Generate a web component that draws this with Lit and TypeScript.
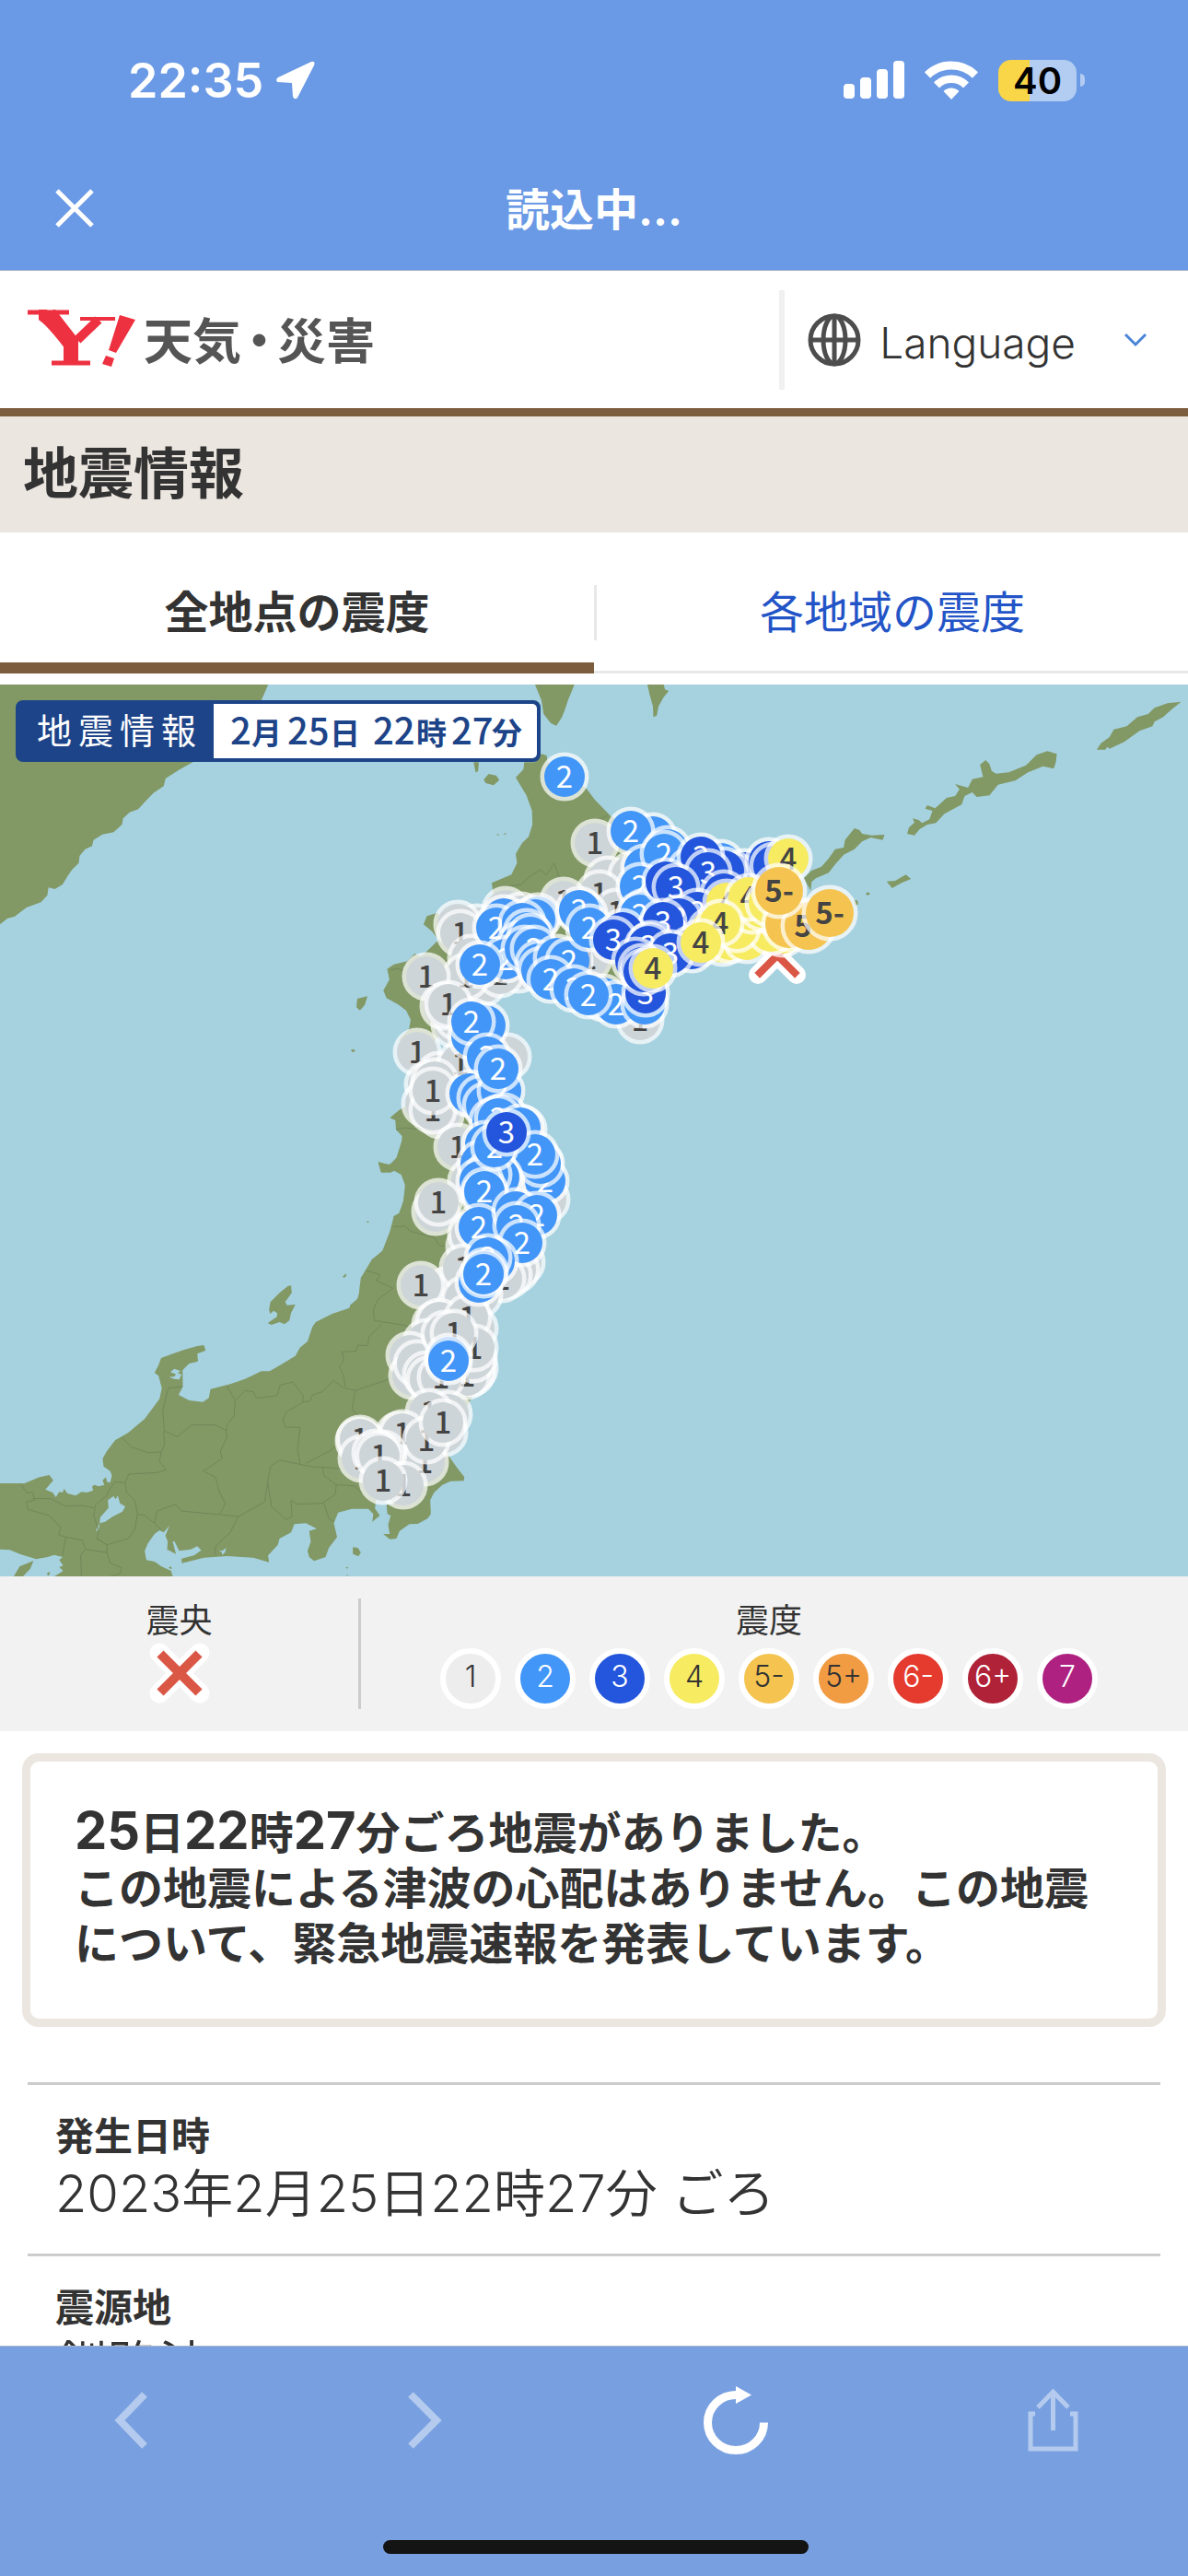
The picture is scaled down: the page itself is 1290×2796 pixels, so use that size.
import { LitElement, html, svg, css } from "lit";
import { customElement } from "lit/decorators.js";

type Level = "1" | "2" | "3" | "4" | "5-" | "5+" | "6-" | "6+" | "7";

const LEVELS: { level: Level; fill: string; dark: boolean }[] = [
  { level: "1", fill: "#ededed", dark: true },
  { level: "2", fill: "#4296f8", dark: false },
  { level: "3", fill: "#2356dd", dark: false },
  { level: "4", fill: "#f6eb61", dark: true },
  { level: "5-", fill: "#f5c450", dark: true },
  { level: "5+", fill: "#f19c43", dark: true },
  { level: "6-", fill: "#e53a2e", dark: false },
  { level: "6+", fill: "#b02238", dark: false },
  { level: "7", fill: "#ae2181", dark: false },
];

// Observation points in map coordinates, later ones lie on top.
const POINTS: Record<string, number[][]> = {
  "1": [
    [646, 915], [660, 955], [686, 950], [651, 970], [669, 990], [612, 978], [639, 1040], [695, 1107],
    [549, 988], [566, 994], [518, 1007], [497, 1003], [500, 1013], [524, 1067], [563, 1052], [543, 1057], [512, 1040],
    [506, 1060], [463, 1060], [494, 1112], [497, 1104], [482, 1092], [487, 1090], [453, 1142], [551, 1147],
    [477, 1167], [500, 1155], [465, 1177], [472, 1174], [462, 1198], [478, 1210], [470, 1205], [470, 1184],
    [497, 1245], [568, 1226], [585, 1262], [593, 1302], [575, 1300], [512, 1282], [552, 1290], [473, 1315], [476, 1305],
    [510, 1353], [512, 1340], [566, 1370], [560, 1378], [552, 1384], [545, 1388], [487, 1400], [503, 1376],
    [520, 1405], [505, 1410], [457, 1395],
    [473, 1438], [515, 1442], [477, 1435], [463, 1457], [515, 1485], [512, 1490], [507, 1493],
    [514, 1475], [508, 1430], [515, 1463], [445, 1471], [448, 1493], [453, 1480], [463, 1492], [483, 1448],
    [493, 1447], [467, 1497], [479, 1495],
    [487, 1535], [466, 1533], [482, 1555], [433, 1558], [437, 1556], [461, 1587], [463, 1563], [481, 1544],
    [390, 1564], [391, 1562], [393, 1583], [416, 1578], [408, 1577], [412, 1580], [438, 1612], [416, 1607],
  ],
  "2": [
    [613, 843], [709, 908], [685, 902], [725, 922], [700, 942], [721, 927], [695, 962], [783, 937], [750, 945],
    [700, 990], [695, 993], [547, 997], [539, 1007], [584, 995], [581, 998], [567, 1002], [572, 1012], [565, 1025],
    [549, 1041], [576, 1017], [570, 1030], [580, 1030], [521, 1047], [585, 1046], [588, 1053], [605, 1040], [618, 1043],
    [598, 1063], [634, 992], [629, 988], [640, 1007], [655, 1083], [669, 1090], [623, 1073], [639, 1080], [700, 1090],
    [512, 1125], [527, 1113], [512, 1109], [529, 1147], [510, 1187], [522, 1192], [528, 1200], [544, 1184], [541, 1160],
    [547, 1212], [535, 1217], [541, 1214], [565, 1224], [527, 1242], [522, 1263], [592, 1282], [587, 1263],
    [581, 1253], [542, 1278], [530, 1275], [521, 1282], [537, 1245], [526, 1297], [526, 1293], [520, 1332],
    [560, 1315], [583, 1319], [561, 1330], [567, 1349], [537, 1369], [520, 1392], [530, 1365], [526, 1380], [525, 1383],
    [487, 1473], [487, 1477],
  ],
  "3": [
    [809, 947], [797, 950], [786, 945], [835, 935], [840, 940], [761, 930], [765, 968], [769, 947], [786, 970],
    [723, 957], [734, 963], [757, 990], [737, 997], [720, 1001], [676, 1012], [666, 1020], [751, 1030], [707, 1025],
    [704, 1027], [728, 1035], [701, 1078], [690, 1043], [697, 1050], [699, 1055], [550, 1229],
  ],
  "4": [
    [856, 932], [772, 1010], [789, 980], [785, 1023], [793, 1020], [811, 1020], [850, 1013], [837, 1011], [840, 990],
    [800, 1008], [817, 988], [828, 985], [813, 974], [835, 980], [782, 1002], [761, 1023], [709, 1051],
  ],
  "5-": [[857, 1003], [878, 1005], [846, 967], [901, 991]],
};

const SHEET_NORTHWEST = [
  "M0 9H708L690 60 660 120 600 190 510 261 475 285 437 315 432 340 405 362 385 388 365 415 342 425 325 445 322 465 300 490 270 497 247 515 243 535 225 545 210 567 208 590 190 612 180 630 165 660 145 675 128 670 125 695 108 718 70 735 38 765 20 770 0 790Z",
  "M1318 670 1345 695 1290 745 1230 780 1180 790 1155 752 1127 763 1118 790 1140 812 1158 840 1118 888 1108 894 1095 885 1075 910 1040 920 1022 935 1028 970 1012 1005 1020 1030 1050 1050 1072 1070 1084 1100 1080 1130 1055 1165 1060 1190 1130 1190 1180 1130 1240 1080 1250 980 1380 960 1568 1000 1568 600 1380 600Z",
  "M1250 262H1264L1262 290 1256 296Z",
  "M1277 318 1290 300 1310 305 1318 320 1303 337 1282 330Z",
  "M943 1032 970 1024 963 1052 950 1070 941 1060Z",
  "M926 1199 933 1196 938 1202 931 1207Z",
  "M1310 498 1315 495 1318 500ZM1328 496 1334 493 1337 498Z",
];
const SHEET_NORTHEAST = [
  "M45 9H137L122 60 115 90 108 115 95 143 82 135 65 105 60 60Z",
  "M307 9H345L348 25 357 30 345 50 333 80 329 110 321 115 320 80 312 40Z",
  "M1552 65 1520 70 1490 85 1475 105 1450 115 1425 145 1395 155 1385 180 1365 200 1355 221H1375L1380 212 1385 218 1420 195 1455 160 1485 145 1490 130 1510 115 1530 90Z",
  "M1262 235 1240 226 1215 238 1190 272 1150 295 1120 299 1110 290 1105 268 1096 255 1083 270 1090 310 1065 317 1055 345 1025 333 1035 350 1025 372 1005 378 978 412 960 402 955 413 972 420 965 448 948 460 940 450 926 445 930 458 917 475 913 495 930 500 942 480 960 465 980 460 1000 430 1040 400 1047 372 1065 360 1075 375 1105 370 1125 335 1165 322 1195 295 1230 275 1255 283 1260 260Z",
  "M860 498 856 515 828 507 808 520 790 545 765 563 745 595 730 622 700 640 690 652 688 680 672 640 690 615 713 602 730 575 745 545 765 540 768 515 790 477 802 483 808 495 830 500Z",
  "M865 650 885 648 910 628 922 642 900 655 878 672Z",
  "M816 690 821 685 827 690 821 696ZM788 712 797 712 799 724 792 730Z",
  "M0 312 18 285 20 262 45 262 60 235 72 240 75 262 110 290 165 348 185 385 222 438 300 500 380 540 480 600 560 600 620 540 645 535 600 640 620 700 690 735 620 800 500 860 400 900 330 950 300 1080 200 1000 100 940 -30 900 -56 655 -10 628 3 590 0 560 15 525 30 505 39 465 38 420 25 370Z",
];
const SHEET_TOHOKU = [
  "M185 360 160 375 130 400 148 408 150 438 170 460 165 505 145 545 125 553 92 543 103 578 132 578 150 570 165 580 180 612 178 660 160 710 143 720 130 770 105 835 72 860 45 905 33 940 30 985 0 1010V1080H450V1000L540 962 545 955 560 850 610 700 640 620 600 560 560 450 480 360 380 250Z",
  "M540 952 547 951 549 957 542 960ZM54 738 60 736 62 740 56 741Z",
];
const SHEET_CENTRAL = [
  "M1568 0H1220L1205 50 1185 72 1150 65 1158 97 1195 90 1220 105 1232 140 1225 200 1213 235 1198 240 1190 290 1165 350 1130 385 1110 420 1097 440 1092 490 1085 515 1060 540 1010 558 960 585 950 600 935 648 912 668 898 695 860 720 820 745 795 745 745 770 700 787 640 803 635 832 617 845 575 840 543 822 556 795 555 742 575 720 602 713 600 688 625 678 620 660 600 663 560 675 520 690 490 702 482 725 470 750 482 760 492 800 485 835 440 900 390 945 350 970 325 1005 312 1030 315 1055 335 1070 340 1085 335 1108 325 1105 322 1090 312 1100 317 1115 300 1120 288 1115 280 1120 283 1133 265 1140 248 1138 230 1150 205 1143 195 1128 190 1140 180 1138 170 1155 160 1140 138 1130 150 1115 162 1100 150 1083 120 1090 75 1110 0 1110V1325L30 1327 60 1340 110 1357 145 1350 165 1343 190 1350 180 1360 192 1378 180 1383 192 1395 178 1405 165 1413H525L520 1395 490 1380 470 1365 445 1360 440 1330 450 1305 470 1275 485 1263 498 1270 515 1248 503 1280 510 1300 508 1325 535 1340 525 1300 530 1298 545 1330 580 1325 600 1315 612 1328 590 1345 552 1355 553 1370 620 1352 690 1347 770 1352 818 1367 815 1345 845 1310 850 1290 885 1270 895 1243 930 1240 963 1258 940 1265 945 1300 935 1330 940 1350 955 1363 990 1350 1000 1320 1025 1285 1015 1240 1028 1205 1070 1193 1120 1193 1135 1210 1132 1235 1155 1215 1140 1192 1145 1150 1200 1150 1195 1180 1175 1180 1178 1210 1188 1215 1180 1245 1185 1275 1165 1275 1185 1292 1205 1290 1215 1265 1245 1243 1270 1242 1300 1225 1310 1210 1308 1165 1320 1140 1345 1115 1370 1103 1410 1102 1412 1090 1390 1060 1360 1015 1400 900 1500 700 1480 560 1568 400Z",
  "M885 466 887 490 867 520 873 530 898 528 885 555 880 580 865 592 850 585 825 594 814 588 842 568 843 556 832 548 822 558 818 545 822 520 850 490 875 468Z",
  "M1042 437 1052 427 1053 434 1046 441Z",
  "M1073 1318 1088 1320 1097 1335 1090 1348 1073 1340Z",
  "M1051 1383 1058 1382 1056 1389ZM1053 1408 1058 1409 1056 1413ZM142 1405 150 1398 152 1405 147 1411ZM512 1385 520 1380 522 1390Z",
  "M42 1413 60 1380 80 1372 102 1362 92 1388 70 1413Z",
];
const CENTRAL_WATER = [
  "M345 1152 352 1162 358 1150 365 1175 381 1186 372 1202 340 1220 320 1235 303 1240 300 1262 291 1265 303 1240 305 1220 330 1190 328 1165Z",
  "M665 1328 676 1330 688 1320 684 1335 676 1343 674 1334Z",
  "M518 748 530 737 550 745 540 750 552 756 545 772 530 770 514 764 530 762 535 755Z",
];
const CENTRAL_BORDERS = [
  "M1195 275 1230 272 1250 290 1320 310 1335 335 1370 340",
  "M1115 418 1155 430 1145 450 1195 475 1150 510 1135 545 1138 580 1230 595 1260 610",
  "M1160 592 1122 632 1118 662 1088 660 1082 680 1040 682 1045 710 1032 730 1045 760 1050 800 1080 808 1200 765",
  "M1080 808 1070 870 1110 910 1160 920",
  "M1045 800 1015 775 980 812 950 822 942 843 920 845 922 825 890 780 852 790 842 825 780 832 770 812 745 808 715 840 690 793",
  "M922 845 870 878 860 905 868 927 912 928 905 1000 912 1048 950 1056 1080 1065",
  "M930 1045 1010 1000 1040 960",
  "M715 840 712 890 690 920 688 938 655 920 582 920 540 958 500 940 495 870 512 800 555 795",
  "M688 935 690 960 670 1005 675 1030 618 1070 655 1090 668 1140 685 1175 668 1212 725 1218",
  "M725 1218 805 1170 815 1100 822 1055 850 1035 912 1048",
  "M815 1110 825 1185 870 1228 888 1218 885 1165 905 1178 980 1175 1020 1145 1022 1115 985 1085 980 1055",
  "M985 1175 1000 1225 1015 1235",
  "M1022 1115 1075 1118 1100 1140",
  "M370 960 400 992 450 1010 490 1008 485 1040 505 1065 480 1075 392 1080 380 1108 350 1105 330 1135 325 1150 290 1180 285 1215 300 1265 295 1290 325 1310",
  "M490 1008 500 985 498 940",
  "M380 1108 385 1140 410 1165 418 1210 410 1260 390 1290 325 1310 295 1290",
  "M418 1210 440 1215 470 1240 478 1200 535 1178 550 1200 668 1212",
  "M470 1240 490 1262",
  "M725 1218 700 1270 655 1315 655 1345",
  "M65 1115 80 1140 100 1140 105 1165 80 1170 85 1195 150 1215 185 1255 178 1278 200 1285 250 1295 260 1325 325 1335 325 1310",
  "M100 1160 155 1160 200 1185 250 1182 285 1190",
  "M200 1285 190 1345M260 1325 245 1345 248 1413M325 1335 335 1370 370 1385 365 1405 335 1413",
];

const paths = (list: string[]) => list.map((d) => svg`<path d=${d}></path>`);

interface Mark {
  x: number;
  y: number;
  r: number;
  level: string;
}

const MARKS: Mark[] = ["1", "2", "3", "4", "5-"].flatMap((level) =>
  POINTS[level].map(([x, y]) => ({ x, y, level, r: level === "5-" ? 26 : 22 }))
);

// A label is drawn only where later circles leave enough of it in view.
const labelShows = (index: number) => {
  const { x, y } = MARKS[index];
  const later = MARKS.slice(index + 1);
  let open = 0;
  let total = 0;
  for (let dx = -8; dx <= 8; dx += 4) {
    for (let dy = -12; dy <= 12; dy += 4) {
      total += 1;
      if (!later.some((m) => Math.hypot(m.x - x - dx, m.y - y - dy) < m.r + 1)) open += 1;
    }
  }
  return open / total > 0.25;
};

const marker = ({ x, y, r, level }: Mark, index: number) => {
  const info = LEVELS.find((l) => l.level === level)!;
  const kind = r > 22 ? "mk strong" : info.dark ? "mk dark" : "mk";
  return svg`<circle class="ring" cx=${x} cy=${y} r=${r + 1}></circle>
    <circle cx=${x} cy=${y} r=${r} fill=${level === "1" ? "#ced5d9" : info.fill}></circle>
    ${labelShows(index) ? svg`<text class=${kind} x=${x} y=${y + 12}>${level}</text>` : null}`;
};

@customElement("quake-map")
export class QuakeMap extends LitElement {
  static styles = css`
    :host {
      display: block;
    }
    svg {
      display: block;
      width: 100%;
      height: auto;
      font-family: "Noto Sans CJK JP", sans-serif;
    }
    .sea {
      fill: #a6d1df;
    }
    .land {
      fill: #829965;
    }
    .borders {
      fill: none;
      stroke: #71875a;
    }
    .borders path {
      vector-effect: non-scaling-stroke;
    }
    .ring {
      fill: none;
      stroke: #ffffff;
      stroke-opacity: 0.72;
      stroke-width: 7px;
    }
    .mk {
      font-size: 33px;
      fill: #ffffff;
      text-anchor: middle;
    }
    .dark {
      font-weight: 500;
      fill: #444444;
    }
    .strong {
      font-weight: 700;
      fill: #444444;
    }
    .banner {
      font-size: 38px;
      fill: #ffffff;
    }
    .when {
      font-size: 40px;
      font-weight: 500;
      fill: #1d4488;
    }
    .unit {
      font-size: 33px;
      font-weight: 700;
    }
  `;

  render() {
    return html`<svg viewBox="0 743 1290 968" role="img" aria-label="震度分布図">
      <rect class="sea" y="743" width="1290" height="968"></rect>
      <g class="land">
        <g transform="translate(0 740) scale(0.41135 0.33333)">${paths(SHEET_NORTHWEST)}</g>
        <g transform="translate(560 740) scale(0.46556 0.33333)">${paths(SHEET_NORTHEAST)}</g>
        <g transform="translate(380 1080) scale(0.33333)">${paths(SHEET_TOHOKU)}</g>
        <g transform="translate(0 1240) scale(0.35714 0.33333)">${paths(SHEET_CENTRAL)}</g>
      </g>
      <g class="sea" transform="translate(0 1240) scale(0.35714 0.33333)">${paths(CENTRAL_WATER)}</g>
      <g class="borders" transform="translate(0 1240) scale(0.35714 0.33333)">${paths(CENTRAL_BORDERS)}</g>
      <g class="borders">
        <path d="M543 963 566 960 574 952 587 944 593 950 602 937 608 955 620 965"></path>
        <path d="M424 1053 432 1051 440 1055"></path>
        <path d="M430 1226 440 1224 462 1227"></path>
        <path d="M650 890 660 885"></path>
      </g>
      <g fill="none" stroke-linecap="round">
        <path d="M823 1016 865 1058M865 1016 823 1058" stroke="#ffffff" stroke-width="20"></path>
        <path d="M825 1018 863 1056M863 1018 825 1056" stroke="#da5645" stroke-width="8" stroke-linecap="square"></path>
      </g>
      ${MARKS.map(marker)}
      <rect x="17" y="760" width="570" height="67" rx="8" fill="#1d4488"></rect>
      <path d="M232 764H578a5 5 0 0 1 5 5V818a5 5 0 0 1-5 5H232Z" fill="#ffffff"></path>
      <text class="banner" x="40 85 130 175" y="807">地震情報</text>
      <text class="when" y="808"><tspan x="250">2</tspan><tspan class="unit" x="273">月</tspan><tspan x="312">25</tspan><tspan class="unit" x="358">日</tspan> <tspan x="405">22</tspan><tspan class="unit" x="452">時</tspan><tspan x="490">27</tspan><tspan class="unit" x="534">分</tspan></text>
    </svg>`;
  }
}

@customElement("app-root")
export class AppRoot extends LitElement {
  static styles = css`
    :host {
      display: flex;
      flex-direction: column;
      height: 100vh;
      background: #ffffff;
      color: #333333;
      font-family: Inter, "Noto Sans CJK JP", sans-serif;
    }
    * {
      box-sizing: border-box;
    }
    h1,
    h2,
    p,
    dl,
    dd {
      margin: 0;
    }
    button {
      display: flex;
      padding: 0;
      border: 0;
      background: none;
      color: inherit;
      font: inherit;
    }
    svg {
      display: block;
      flex: none;
    }
    .top {
      flex: none;
      height: 294px;
      background: #6a99e5;
      border-bottom: 1px solid #a9b4c8;
      color: #ffffff;
    }
    .status {
      display: flex;
      align-items: center;
      gap: 22px;
      height: 174px;
      padding: 0 112px 0 139px;
    }
    .clock {
      display: flex;
      align-items: center;
      gap: 14px;
      margin-right: auto;
      font-size: 52px;
      font-weight: 600;
    }
    .battery {
      display: flex;
      align-items: center;
      gap: 4px;
    }
    .cell {
      width: 85px;
      height: 45px;
      border-radius: 14px;
      background: linear-gradient(to right, #f8d648 40%, #b3cdf2 40%);
      color: #000000;
      font-size: 40px;
      font-weight: 600;
      line-height: 45px;
      text-align: center;
    }
    .cap {
      width: 5px;
      height: 14px;
      border-radius: 0 5px 5px 0;
      background: #b3cdf2;
    }
    .nav {
      display: grid;
      grid-template-columns: 1fr auto 1fr;
      align-items: center;
      height: 104px;
      padding: 0 60px;
    }
    .nav-title {
      padding-top: 4px;
      font-size: 48px;
      font-weight: 700;
      line-height: 60px;
    }
    .page {
      flex: 1;
      min-height: 0;
      overflow: hidden;
    }
    .brand-bar {
      display: flex;
      align-items: center;
      height: 158px;
      padding: 0 44px 0 30px;
      border-bottom: 9px solid #7c5d3e;
    }
    .brand {
      display: flex;
      align-items: center;
      gap: 6px;
      margin-right: auto;
      color: #555555;
      font-size: 53px;
      font-weight: 700;
      line-height: 60px;
      text-decoration: none;
    }
    .brand-name {
      padding-top: 4px;
    }
    .dot {
      margin: 0 -7px;
    }
    .language {
      align-items: center;
      gap: 20px;
      height: 108px;
      padding-left: 25px;
      border-left: 6px solid #f0f0f0;
      font-size: 46px;
      font-weight: 300;
    }
    .language span {
      margin-right: 32px;
      padding-top: 6px;
    }
    .heading {
      height: 126px;
      padding: 0 25px;
      background: #ece6e0;
      font-size: 60px;
      font-weight: 700;
      line-height: 124px;
    }
    .tabs {
      display: grid;
      grid-template-columns: 1fr 1fr;
      margin-bottom: 12px;
    }
    .tab {
      display: flex;
      height: 153px;
      padding: 57px 0 0;
      border-bottom: 3px solid #e8e8e8;
      color: #2354c7;
      font-size: 48px;
      line-height: 60px;
      text-decoration: none;
    }
    .tab span {
      flex: 1;
      height: 60px;
      border-left: 3px solid #e8e8e8;
      text-align: center;
    }
    .tab.on {
      border-bottom: 12px solid #7c5d3e;
      color: #333333;
      font-weight: 700;
    }
    .tab.on span {
      border-left: 0;
    }
    .legend {
      display: flex;
      height: 168px;
      padding: 24px 0;
      background: #f2f2f2;
      font-size: 36px;
      line-height: 48px;
    }
    .epicenter,
    .scale {
      display: flex;
      flex-direction: column;
      align-items: center;
    }
    .epicenter {
      flex: 0 0 392px;
      border-right: 3px solid #cccccc;
    }
    .scale {
      flex: 1;
      padding-right: 12px;
    }
    .levels {
      display: flex;
      gap: 15px;
      margin-top: 6px;
    }
    .level {
      width: 66px;
      height: 66px;
      border: 6px solid #ffffff;
      border-radius: 50%;
      font-size: 32px;
      font-weight: 300;
      line-height: 50px;
      text-align: center;
      color: #ffffff;
    }
    .level.dark {
      color: #333333;
    }
    .notice {
      margin: 24px 24px 60px;
      padding: 48px;
      border: 9px solid #ece6e0;
      border-radius: 18px;
      font-size: 48px;
      font-weight: 700;
      line-height: 60px;
      height: 297px;
    }
    .num {
      font-size: 56px;
      line-height: 48px;
    }
    .facts {
      padding: 0 30px;
    }
    .fact {
      padding: 29px 30px 30px;
      border-top: 3px solid #cccccc;
    }
    .fact dt {
      font-size: 42px;
      font-weight: 700;
      line-height: 54px;
    }
    .fact dd {
      font-size: 56px;
      font-weight: 350;
      line-height: 70px;
    }
    .bottom {
      flex: none;
      display: flex;
      flex-direction: column;
      justify-content: space-between;
      align-items: center;
      height: 250px;
      padding: 43px 119px 24px 123px;
      border-top: 1px solid #a9b4c8;
      background: #78a0e0;
      color: #ffffff;
    }
    .tools {
      display: flex;
      justify-content: space-between;
      align-items: center;
      width: 100%;
    }
    .dim {
      color: #b4caee;
    }
    .home {
      width: 462px;
      height: 15px;
      border-radius: 8px;
      background: #141414;
    }
  `;

  render() {
    return html`
      <header class="top">
        <div class="status">
          <div class="clock">
            <span>22:35</span>
            <svg width="42" height="42" viewBox="0 0 42 42" fill="currentColor">
              <path d="M38 1 2 18Q-1 20 1 23L17 24 18 39Q20 43 23 40L41 5Q43 0 38 1Z"></path>
            </svg>
          </div>
          <svg width="66" height="42" viewBox="0 0 66 42" fill="currentColor">
            <rect y="25" width="12" height="16" rx="4"></rect>
            <rect x="18" y="18" width="12" height="23" rx="4"></rect>
            <rect x="36" y="9" width="12" height="32" rx="4"></rect>
            <rect x="54" width="12" height="41" rx="4"></rect>
          </svg>
          <svg width="58" height="42" viewBox="0 0 58 42" fill="none" stroke="currentColor">
            <path d="M3 15.500A37.500 37.500 0 0 1 55 15.500" stroke-width="9"></path>
            <path d="M13 26.500A22.500 22.500 0 0 1 45 26.500" stroke-width="8.500"></path>
            <path d="M29 42 20.500 33A12 12 0 0 1 37.500 33Z" fill="currentColor" stroke="none"></path>
          </svg>
          <div class="battery"><div class="cell">40</div><div class="cap"></div></div>
        </div>
        <nav class="nav">
          <button aria-label="閉じる">
            <svg width="42" height="42" viewBox="0 0 42 42" fill="none" stroke="currentColor" stroke-width="5">
              <path d="M2 2 40 40M40 2 2 40"></path>
            </svg>
          </button>
          <div class="nav-title">読込中...</div>
        </nav>
      </header>

      <main class="page">
        <div class="brand-bar">
          <a class="brand" href="#">
            <svg width="120" height="66" viewBox="0 0 120 66" fill="none" stroke="#ee3140">
              <path d="M0 3H45" stroke-width="5"></path>
              <path d="M57 10H95" stroke-width="4"></path>
              <path d="M26 58H68" stroke-width="5"></path>
              <path d="M12 4Q20 4 46 38" stroke-width="14"></path>
              <path d="M23 4 47 35" stroke-width="16"></path>
              <path d="M77 11 54 33" stroke-width="10"></path>
              <path d="M47 31V57" stroke-width="16"></path>
              <path d="M100 6 117 11 96 47 88 44ZM85 50 94 53 91 62 81 59Z" fill="#ee3140" stroke="none"></path>
            </svg>
            <span class="brand-name">天気<span class="dot">・</span>災害</span>
          </a>
          <button class="language">
            <svg width="58" height="58" viewBox="0 0 58 58" fill="none" stroke="#4d4d4d" stroke-width="5">
              <circle cx="29" cy="29" r="26"></circle>
              <ellipse cx="29" cy="29" rx="12" ry="26"></ellipse>
              <path d="M29 3V55M3 29H55"></path>
            </svg>
            <span>Language</span>
            <svg width="26" height="16" viewBox="0 0 26 16" fill="none" stroke="#4a86d8" stroke-width="3">
              <path d="M2 2 13 13 24 2"></path>
            </svg>
          </button>
        </div>
        <h1 class="heading">地震情報</h1>
        <nav class="tabs">
          <a class="tab on" href="#all"><span>全地点の震度</span></a>
          <a class="tab" href="#areas"><span>各地域の震度</span></a>
        </nav>
        <quake-map></quake-map>
        <section class="legend">
          <div class="epicenter">
            <span>震央</span>
            <svg width="66" height="66" viewBox="0 0 66 66" fill="none">
              <path d="M11 11 55 55M55 11 11 55" stroke="#ffffff" stroke-width="21" stroke-linecap="round"></path>
              <path d="M12 12 54 54M54 12 12 54" stroke="#da5645" stroke-width="10"></path>
            </svg>
          </div>
          <div class="scale">
            <span>震度</span>
            <div class="levels">
              ${LEVELS.map(
                (l) => html`<div class=${l.dark ? "level dark" : "level"} style="background:${l.fill}">${l.level}</div>`
              )}
            </div>
          </div>
        </section>
        <p class="notice">
          <span class="num">25</span>日<span class="num">22</span>時<span class="num">27</span>分ごろ地震がありました。<br />この地震による津波の心配はありません。この地震について、緊急地震速報を発表しています。
        </p>
        <dl class="facts">
          <div class="fact">
            <dt>発生日時</dt>
            <dd>2023年2月25日22時27分 ごろ</dd>
          </div>
          <div class="fact">
            <dt>震源地</dt>
            <dd>釧路沖</dd>
          </div>
        </dl>
      </main>

      <footer class="bottom">
        <div class="tools">
          <button class="dim" aria-label="戻る">
            <svg width="37" height="62" viewBox="0 0 37 62" fill="none" stroke="currentColor" stroke-width="8">
              <path d="M34 3 7 31 34 59"></path>
            </svg>
          </button>
          <button class="dim" aria-label="進む">
            <svg width="39" height="62" viewBox="0 0 39 62" fill="none" stroke="currentColor" stroke-width="8">
              <path d="M4 3 32 31 4 59"></path>
            </svg>
          </button>
          <button aria-label="再読み込み">
            <svg width="70" height="74" viewBox="0 0 70 74" fill="none" stroke="currentColor">
              <path d="M35 9.500A30.500 30 0 1 0 65.500 39.500" stroke-width="9"></path>
              <path d="M35 0 52 9.500 35 19Z" fill="currentColor" stroke="none"></path>
            </svg>
          </button>
          <button class="dim" aria-label="共有">
            <svg width="55" height="70" viewBox="0 0 55 70" fill="none" stroke="currentColor" stroke-width="5">
              <path d="M8 28H3V66H52V28H46"></path>
              <path d="M27.500 46V5M11 21 27.500 4 44 21"></path>
            </svg>
          </button>
        </div>
        <div class="home"></div>
      </footer>
    `;
  }
}
